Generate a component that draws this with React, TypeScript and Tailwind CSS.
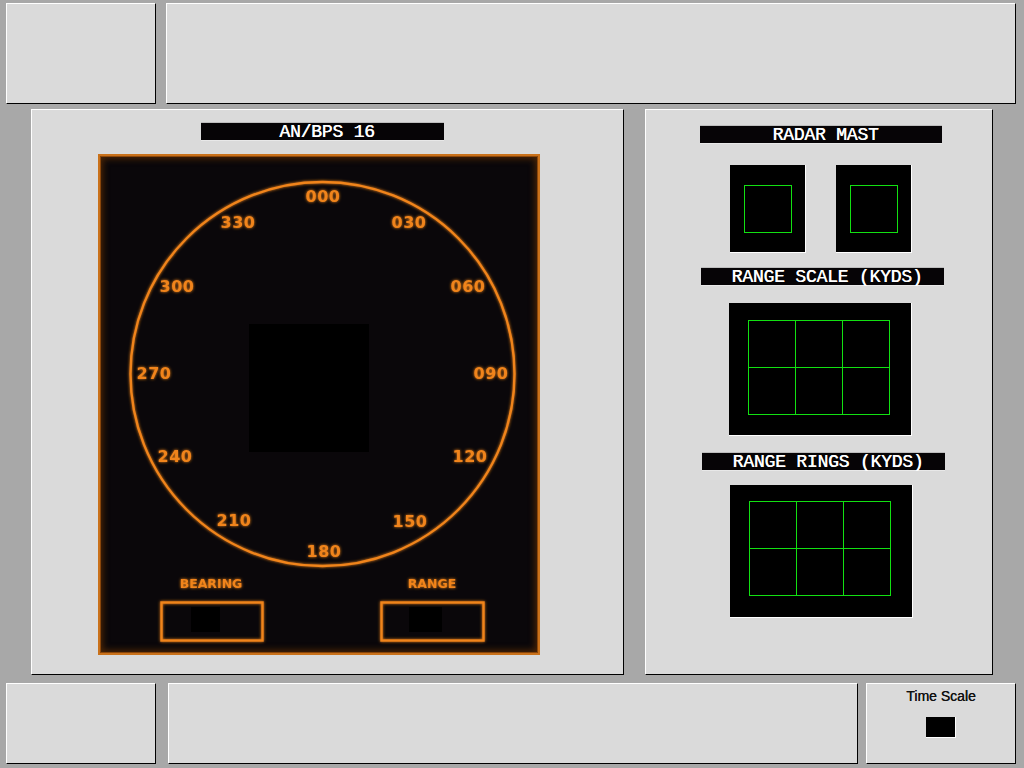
import React from "react";

const bevel = "bg-[#dadada] border border-t-white border-l-white border-b-black border-r-black";

function TitleBar({ text, className = "" }: { text: string; className?: string }) {
  return (
    <div
      className={`h-[19px] bg-[#060406] border-t border-[#bdbdbd] border-b border-b-[#e8e8e8] flex items-center justify-center text-white text-[18px] leading-none ${className}`}
      style={{ fontFamily: '"Liberation Mono", "Courier New", monospace' }}
    >
      <span className="pl-[9px] tracking-[-0.2px] [text-shadow:0.4px_0_0_#fff]">{text}</span>
    </div>
  );
}

function GreenGrid() {
  return (
    <div className="w-[142px] h-[95px] border border-[#12e012] bg-[#12e012] grid grid-cols-3 grid-rows-2 gap-px">
      {[0, 1, 2, 3, 4, 5].map((i) => (
        <div key={i} className="bg-black" />
      ))}
    </div>
  );
}

function RadarFace() {
  const orange = "#f0841a";
  const cx = 222.5;
  const cy = 218;
  const labels: [string, number, number][] = [
    ["000", 223, 40],
    ["030", 309, 66],
    ["060", 368, 130],
    ["090", 391, 217],
    ["120", 370, 300],
    ["150", 310, 365],
    ["180", 224, 395],
    ["210", 134, 364],
    ["240", 75, 300],
    ["270", 54, 217],
    ["300", 77, 130],
    ["330", 138, 66],
  ];
  return (
    <svg width="438" height="497" viewBox="0 0 438 497" className="block">
      <defs>
        <filter id="glow" x="-20%" y="-20%" width="140%" height="140%">
          <feGaussianBlur stdDeviation="1.6" result="b" />
          <feMerge>
            <feMergeNode in="b" />
            <feMergeNode in="SourceGraphic" />
          </feMerge>
        </filter>
      </defs>
      <rect x={149} y={168} width={120} height={128} fill="#000" />
      <g filter="url(#glow)">
        <circle cx={cx} cy={cy} r={192} fill="none" stroke={orange} strokeWidth={2.4} />
        {labels.map(([t, x, y]) => (
          <text
            key={t}
            x={x}
            y={y}
            fill={orange}
            fontSize={16}
            fontWeight={700}
            textAnchor="middle"
            dominantBaseline="central"
            fontFamily='"DejaVu Sans", "Liberation Sans", sans-serif'
            letterSpacing="0.5"
          >
            {t}
          </text>
        ))}
        <text x={111} y={427} fill={orange} fontSize={12.5} fontWeight={700} textAnchor="middle" dominantBaseline="central" fontFamily='"DejaVu Sans", sans-serif'>
          BEARING
        </text>
        <text x={332} y={427} fill={orange} fontSize={12.5} fontWeight={700} textAnchor="middle" dominantBaseline="central" fontFamily='"DejaVu Sans", sans-serif'>
          RANGE
        </text>
        <rect x={61.5} y={446.5} width={101} height={38} fill="none" stroke={orange} strokeWidth={2.4} />
        <rect x={281.5} y={446.5} width={102} height={38} fill="none" stroke={orange} strokeWidth={2.4} />
      </g>
      <rect x={91} y={451} width={29} height={25} fill="#000" />
      <rect x={309} y={451} width={33} height={25} fill="#000" />
    </svg>
  );
}

function SunkenBox({ className = "", children }: { className?: string; children?: React.ReactNode }) {
  return (
    <div className={`bg-black border-r border-b border-r-white border-b-white ${className}`}>{children}</div>
  );
}

export default function App() {
  return (
    <div className="w-[1024px] h-[768px] bg-[#a8a8a8] overflow-hidden flex flex-col">
      {/* Row 1 */}
      <div className="flex pt-[3px] pl-[6px] gap-[10px]">
        <div className={`${bevel} w-[150px] h-[101px]`} />
        <div className={`${bevel} w-[850px] h-[101px]`} />
      </div>

      {/* Row 2 */}
      <div className="flex mt-[5px] pl-[31px] gap-[21px]">
        <div className={`${bevel} w-[593px] h-[566px] flex flex-col items-start`}>
          <TitleBar text="AN/BPS 16" className="ml-[169px] mt-[12px] w-[243px]" />
          <div className="ml-[66px] mt-[13px] w-[442px] h-[501px] border-2 border-[#c9711a] bg-[#0a070a] shadow-[inset_0_0_0_1px_#8a460a,inset_0_0_6px_3px_#4a2506]">
            <RadarFace />
          </div>
        </div>

        <div className={`${bevel} w-[348px] h-[566px] flex flex-col items-start`}>
          <TitleBar text="RADAR MAST" className="ml-[54px] mt-[15px] w-[242px]" />
          <div className="flex ml-[84px] mt-[21px] gap-[30px]">
            <SunkenBox className="w-[76px] h-[88px] pl-[14px] pt-[20px]">
              <div className="w-[48px] h-[48px] border border-[#12e012]" />
            </SunkenBox>
            <SunkenBox className="w-[76px] h-[88px] pl-[14px] pt-[20px]">
              <div className="w-[48px] h-[48px] border border-[#12e012]" />
            </SunkenBox>
          </div>
          <TitleBar text="RANGE SCALE (KYDS)" className="ml-[55px] mt-[14px] w-[243px]" />
          <SunkenBox className="ml-[83px] mt-[17px] w-[183px] h-[133px] pl-[19px] pt-[17px]">
            <GreenGrid />
          </SunkenBox>
          <TitleBar text="RANGE RINGS (KYDS)" className="ml-[56px] mt-[16px] w-[243px]" />
          <SunkenBox className="ml-[84px] mt-[14px] w-[183px] h-[133px] pl-[19px] pt-[16px]">
            <GreenGrid />
          </SunkenBox>
        </div>
      </div>

      {/* Row 3 */}
      <div className="flex mt-[8px] pl-[6px]">
        <div className={`${bevel} w-[150px] h-[81px]`} />
        <div className={`${bevel} w-[690px] h-[81px] ml-[12px]`} />
        <div className={`${bevel} w-[150px] h-[81px] ml-[8px] flex flex-col items-center`}>
          <div
            className="mt-[4px] text-[14px] leading-[16px] text-[#111] [text-shadow:0.3px_0_0_#111]"
            style={{ fontFamily: '"Liberation Sans", Arial, sans-serif' }}
          >
            Time Scale
          </div>
          <SunkenBox className="mt-[13px] w-[30px] h-[21px]" />
        </div>
      </div>
    </div>
  );
}
